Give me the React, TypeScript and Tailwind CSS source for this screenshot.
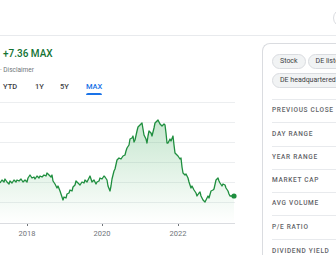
const points: [number, number][] = [
  [0, 190], [2, 187], [4, 189], [5, 186], [7, 189], [9, 191], [10, 188], [12, 190], [14, 187], [16, 189],
  [17, 187], [19, 188], [21, 186], [23, 189], [25, 187], [27, 189], [28, 185], [30, 182], [32, 185], [34, 184],
  [35, 186], [37, 183], [39, 185], [40, 183], [42, 184], [44, 182], [46, 183], [47, 180], [49, 182], [51, 184],
  [52, 182], [53, 188], [55, 191], [57, 195], [58, 193], [60, 198], [61, 201], [63, 207], [64, 204], [66, 205],
  [67, 201], [69, 200], [70, 197], [72, 198], [73, 194], [75, 192], [76, 188], [78, 190], [80, 192], [82, 189],
  [84, 190], [85, 187], [87, 189], [89, 185], [90, 183], [92, 189], [94, 187], [96, 191], [97, 189], [99, 188],
  [100, 185], [102, 186], [104, 183], [105, 184], [107, 187], [108, 193], [110, 198], [111, 193], [112, 186], [114, 178],
  [115, 176], [117, 167], [119, 165], [121, 166], [123, 163], [125, 162], [126, 158], [127, 155], [129, 152], [130, 146],
  [132, 145], [133, 143], [134, 149], [135, 147], [137, 138], [138, 134], [140, 132], [142, 130], [143, 136], [144, 142],
  [146, 146], [147, 150], [148, 143], [149, 138], [151, 140], [152, 143], [154, 135], [155, 130], [157, 128], [158, 127],
  [160, 131], [162, 133], [164, 131], [165, 132], [166, 140], [167, 150], [168, 150], [170, 146], [171, 148], [173, 143],
  [174, 152], [175, 160], [177, 162], [178, 163], [180, 166], [181, 165], [182, 174], [183, 180], [185, 182], [186, 181],
  [188, 185], [189, 189], [191, 195], [192, 193], [194, 197], [196, 200], [197, 203], [199, 200], [200, 199], [201, 203],
  [203, 207], [205, 209], [206, 207], [208, 203], [209, 205], [211, 198], [213, 197], [214, 196], [216, 187], [218, 185],
  [219, 188], [220, 190], [222, 193], [223, 191], [225, 192], [226, 195], [228, 198], [229, 201], [230, 203], [232, 203],
  [234, 203],
];

const linePath = points.map(([x, y], i) => `${i === 0 ? 'M' : 'L'}${x} ${y}`).join(' ');
const areaPath = `${linePath} L234 230 L0 230 Z`;

const gridYs = [109, 129, 149, 169, 189, 209];
const years = [
  { x: 27, label: '2018' },
  { x: 102, label: '2020' },
  { x: 178, label: '2022' },
];

const stats = ['Previous close', 'Day range', 'Year range', 'Market cap', 'Avg Volume', 'P/E ratio', 'Dividend yield'];

function PriceChart() {
  return (
    <svg width="240" height="150" viewBox="0 100 240 150" className="block">
      <defs>
        <linearGradient id="fill" x1="0" y1="0" x2="0" y2="1">
          <stop offset="0%" stopColor="#34a853" stopOpacity="0.28" />
          <stop offset="100%" stopColor="#34a853" stopOpacity="0" />
        </linearGradient>
      </defs>
      {gridYs.map((y) => (
        <line key={y} x1="0" x2="235" y1={y + 0.5} y2={y + 0.5} stroke="#eceef0" strokeWidth="1" />
      ))}
      <line x1="0" x2="235" y1="230.5" y2="230.5" stroke="#dadce0" strokeWidth="1" />
      <path d={areaPath} fill="url(#fill)" />
      <path d={linePath} fill="none" stroke="#1e8e3e" strokeWidth="1.3" strokeLinejoin="round" />
      <circle cx="234" cy="203" r="2.6" fill="#1e8e3e" />
      {years.map((y) => (
        <g key={y.label}>
          <line x1={y.x + 0.5} x2={y.x + 0.5} y1="231" y2="233" stroke="#70757a" strokeWidth="1" />
          <text x={y.x} y="243" textAnchor="middle" fill="#70757a" fontSize="7.5" fontFamily="Roboto, sans-serif">
            {y.label}
          </text>
        </g>
      ))}
    </svg>
  );
}

export default function App() {
  return (
    <div className="w-[336px] h-[255px] overflow-hidden bg-white font-['Roboto',sans-serif]">
      <div className="relative h-[36px] border-b border-[#e8eaed]">
        <div className="absolute left-[333px] top-[9px] h-[18px] w-[24px] rounded-full border border-[#dadce0]" />
      </div>

      <div className="flex">
        <div className="w-[262px] shrink-0">
          <div className="pl-[3px] pt-[12px] text-[10px] leading-[12px] font-medium text-[#137333]">+7.36 MAX</div>
          <div className="mt-[6px] text-[6.5px] leading-[8px] text-[#70757a]">· Disclaimer</div>
          <div className="mt-[8px] flex pl-[3px] text-[7.5px] leading-[9px] font-medium text-[#3c4043]">
            <span className="w-[32px]">YTD</span>
            <span className="w-[25px]">1Y</span>
            <span className="w-[26px]">5Y</span>
            <span className="relative text-[#1a73e8]">
              MAX
              <span className="absolute left-0 right-0 top-[11px] h-[2px] rounded-t bg-[#1a73e8]" />
            </span>
          </div>
          <div className="mt-[2px]">
            <PriceChart />
          </div>
        </div>

        <div className="mt-[7px] flex-1 rounded-tl-[8px] border-l border-t border-[#dadce0] pl-[9px] pt-[10px]">
          <div className="flex flex-wrap gap-x-[2px] gap-y-[4px] w-[120px]">
            {['Stock', 'DE listed', 'DE headquartered'].map((c) => (
              <span
                key={c}
                className="whitespace-nowrap rounded-full border border-[#dadce0] bg-[#f1f3f4] px-[7px] text-[7px] leading-[13px] text-[#3c4043]"
              >
                {c}
              </span>
            ))}
          </div>
          <div className="mt-[11px] border-t border-[#e8eaed]">
            {stats.map((s, i) => (
              <div
                key={s}
                className={`h-[23.3px] flex items-center text-[6.5px] font-medium uppercase tracking-[0.7px] text-[#5f6368] ${
                  i < stats.length - 1 ? 'border-b border-[#e8eaed]' : ''
                }`}
              >
                {s}
              </div>
            ))}
          </div>
        </div>
      </div>
    </div>
  );
}
